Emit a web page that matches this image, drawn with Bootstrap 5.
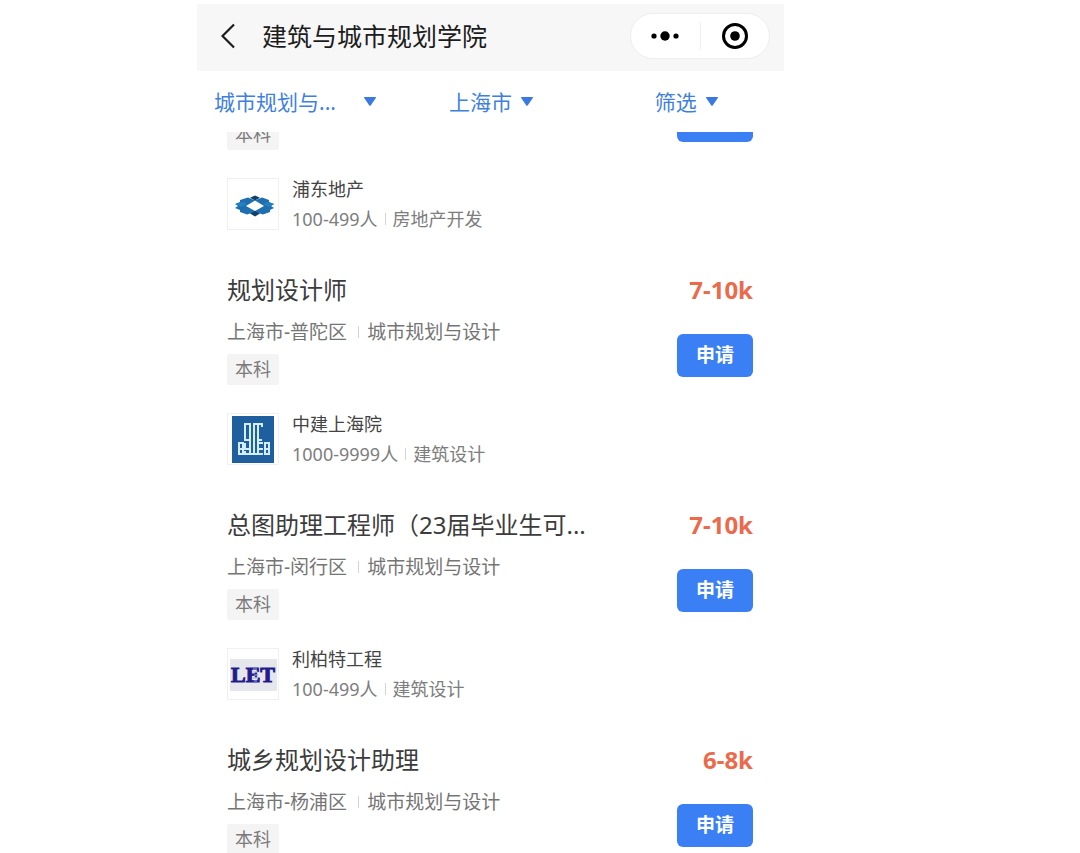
<!DOCTYPE html>
<html lang="zh-CN">
<head>
<meta charset="utf-8">
<meta name="viewport" content="width=device-width, initial-scale=1">
<title>建筑与城市规划学院</title>
<link href="https://cdn.jsdelivr.net/npm/bootstrap@5.3.0/dist/css/bootstrap.min.css" rel="stylesheet">
<style>
  :root { --brand: #3b7ff5; --link: #3f7fe0; }
  body { font-family: "Noto Sans", "Noto Sans CJK SC", sans-serif; background: #fff; color: #3c3c3c; }
  .stage { display: grid; grid-template-columns: 197fr 587fr 296fr; height: 100vh; padding-top: 4px; overflow: hidden; }
  .app { grid-column: 2; min-width: 0; }
  .topbar { background: #f7f7f7; height: 67px; padding: 0 14px 4px 24px; }
  .topbar h1 { font-size: 25px; line-height: 36px; color: #1c1c1c; margin-left: 27px; }
  .plain { border: 0; background: none; padding: 0; line-height: 0; }
  .capsule { width: 140px; height: 46px; background: #fff; border: 1px solid #eee; border-radius: 23px; }
  .capsule .plain { flex: 1; }
  .capsule-line { width: 1px; height: 28px; background: #eee; }
  .filters { display: grid; grid-template-columns: 40fr 35fr 22fr; height: 61px; padding-left: 17px; align-items: center; }
  .filter-pick { font-size: 21px; line-height: 32px; color: var(--link); border: 0; padding: 0; background-color: transparent; text-align: left;
    --bs-form-select-bg-img: url("data:image/svg+xml,%3Csvg xmlns='http://www.w3.org/2000/svg' viewBox='0 0 12 9'%3E%3Cpath d='M.5 0h11q.8.2.3 1L6.7 8.5q-.7.7-1.4 0L.2 1Q-.3.2.5 0z' fill='%233a79e0'/%3E%3C/svg%3E");
    background-image: var(--bs-form-select-bg-img); background-repeat: no-repeat; background-position: right center; background-size: 12px 9px; }
  .pick-wide { width: 162px; }
  .pick-mid { width: 84px; }
  .pick-small { width: 63px; }
  .jobs { padding: 0 31px 0 30px; }
  .job-cut { height: 18px; overflow: hidden; }
  .job-title { font-size: 24px; line-height: 36px; margin: 0 0 10px; }
  .meta { font-size: 19px; line-height: 28px; color: #757575; }
  .info { font-size: 18px; line-height: 30px; color: #7d7d7d; }
  .firm { font-size: 18px; line-height: 30px; color: #444; }
  .bar-sep { width: 1px; height: 12px; background: #d4d4d4; margin: 0 7px; }
  .meta .bar-sep { margin: 0 8px 0 11px; }
  .degree { font-size: 18px; line-height: 31px; padding: 0 8px; background: #f4f4f4; color: #7b7b7b; border-radius: 2px; }
  .meta + .degree { margin-top: 8px; }
  .salary { font-size: 24px; line-height: 36px; font-weight: 700; color: #ec6a4c; }
  .apply, .apply:hover { width: 76px; height: 43px; padding: 0; font-size: 19px; font-weight: 700; color: #fff; border: 0; border-radius: 6px; background: var(--brand); margin-bottom: 8px; }
  .company { margin: 24px 0 38px; }
  .logo-box { width: 52px; height: 52px; border: 1px solid #f0f0f0; margin-right: 13px; flex: none; }
  .logo-box svg { display: block; width: 50px; height: 50px; }
</style>
</head>
<body>
<div class="stage">
  <div class="app">
    <header class="topbar d-flex align-items-center">
      <button class="plain" type="button" aria-label="返回"><svg width="14" height="26" viewBox="0 0 14 26" fill="none" stroke="#1c1c1c" stroke-width="2.2"><path d="M13 1.500 1.500 13 13 24.500"/></svg></button>
      <h1 class="mb-0 fw-normal text-nowrap">建筑与城市规划学院</h1>
      <div class="capsule d-flex align-items-center ms-auto">
        <button class="plain" type="button" aria-label="更多"><svg width="30" height="12" viewBox="0 0 30 12"><circle cx="4" cy="6" r="2.600"/><circle cx="15" cy="6" r="4.700"/><circle cx="26" cy="6" r="2.600"/></svg></button>
        <span class="capsule-line"></span>
        <button class="plain" type="button" aria-label="关闭"><svg width="28" height="28" viewBox="0 0 28 28"><circle cx="14" cy="14" r="11.500" fill="none" stroke="#000" stroke-width="3"/><circle cx="14" cy="14" r="4.800"/></svg></button>
      </div>
    </header>

    <nav class="filters" aria-label="筛选条件">
      <select class="form-select filter-pick pick-wide" aria-label="专业"><option>城市规划与...</option></select>
      <select class="form-select filter-pick pick-mid" aria-label="城市"><option>上海市</option></select>
      <button class="filter-pick pick-small" type="button">筛选</button>
    </nav>

    <main class="jobs">
      <article>
        <div class="job-cut d-flex justify-content-between align-items-end">
          <span class="degree">本科</span>
          <button class="btn apply" type="button" aria-label="申请"></button>
        </div>
        <div class="company d-flex align-items-center">
          <div class="logo-box"><svg viewBox="0 0 50 50" role="img" aria-label="浦东地产">
            <path fill="#1d6fb0" d="M20 18.500l6 2.500h2l6-2.500 7 2.500v2l5 2-3 2 3 2-4 2v2l-7 2.500-6-2h-4l-6 2-7-2.500v-2l-5-2 3-2-3-2 5-2v-2z"/>
            <path fill="#2680c0" d="M8 25l6-2 5 2-6 3zM46 25l-6-2-5 2 6 3z"/>
            <path fill="#12406b" d="M27 16.500l5 2.300-5 2.700-5-2.700zM27 32l5 2.500-5 3-5-3z"/>
            <path fill="#fff" d="M27 21.500l9 5.500-9 5-9-5z"/>
          </svg></div>
          <div>
            <div class="firm">浦东地产</div>
            <div class="info d-flex align-items-center">100-499人<span class="bar-sep"></span>房地产开发</div>
          </div>
        </div>
      </article>

      <article>
        <div class="d-flex justify-content-between">
          <div class="d-flex flex-column align-items-start">
            <h2 class="job-title fw-normal">规划设计师</h2>
            <div class="meta d-flex align-items-center">上海市-普陀区<span class="bar-sep"></span>城市规划与设计</div>
            <span class="degree">本科</span>
          </div>
          <div class="d-flex flex-column justify-content-between align-items-end">
            <span class="salary">7-10k</span>
            <button class="btn apply" type="button">申请</button>
          </div>
        </div>
        <div class="company d-flex align-items-center">
          <div class="logo-box"><svg viewBox="0 0 50 50" role="img" aria-label="中建上海院">
            <path fill="#205f9e" d="M4 2h42v47H4z"/>
            <g fill="none" stroke="#d3eefb" stroke-width="2">
              <path d="M17 27V10h5v3M17 26h5v14h-5v-3M22 26V10M26 40V10h4v30M34 13v-3h-4M30 26h4"/>
              <path d="M11 29h4v11h-4zM11 35h4M17 29v6h5M22 40h8M30 29h5M30 35h5M30 40h5M37 29h4v11h-4zM37 35h4"/>
            </g>
          </svg></div>
          <div>
            <div class="firm">中建上海院</div>
            <div class="info d-flex align-items-center">1000-9999人<span class="bar-sep"></span>建筑设计</div>
          </div>
        </div>
      </article>

      <article>
        <div class="d-flex justify-content-between">
          <div class="d-flex flex-column align-items-start">
            <h2 class="job-title fw-normal">总图助理工程师（23届毕业生可...</h2>
            <div class="meta d-flex align-items-center">上海市-闵行区<span class="bar-sep"></span>城市规划与设计</div>
            <span class="degree">本科</span>
          </div>
          <div class="d-flex flex-column justify-content-between align-items-end">
            <span class="salary">7-10k</span>
            <button class="btn apply" type="button">申请</button>
          </div>
        </div>
        <div class="company d-flex align-items-center">
          <div class="logo-box"><svg viewBox="0 0 50 50" role="img" aria-label="利柏特工程">
            <path fill="#e6e7ec" d="M2 10h47v32H2z"/>
            <text x="25" y="33" text-anchor="middle" font-family="Liberation Serif, serif" font-weight="700" font-size="22" fill="#1f1c8c" stroke="#1f1c8c" stroke-width="1">LET</text>
            <path stroke="#a9a9da" stroke-width="1" d="M25 20h4M25 23h5M26 26h4M25 29h5M26 32h3"/>
          </svg></div>
          <div>
            <div class="firm">利柏特工程</div>
            <div class="info d-flex align-items-center">100-499人<span class="bar-sep"></span>建筑设计</div>
          </div>
        </div>
      </article>

      <article>
        <div class="d-flex justify-content-between">
          <div class="d-flex flex-column align-items-start">
            <h2 class="job-title fw-normal">城乡规划设计助理</h2>
            <div class="meta d-flex align-items-center">上海市-杨浦区<span class="bar-sep"></span>城市规划与设计</div>
            <span class="degree">本科</span>
          </div>
          <div class="d-flex flex-column justify-content-between align-items-end">
            <span class="salary">6-8k</span>
            <button class="btn apply" type="button">申请</button>
          </div>
        </div>
      </article>
    </main>
  </div>
</div>
<script src="https://cdn.jsdelivr.net/npm/bootstrap@5.3.0/dist/js/bootstrap.bundle.min.js"></script>
</body>
</html>
